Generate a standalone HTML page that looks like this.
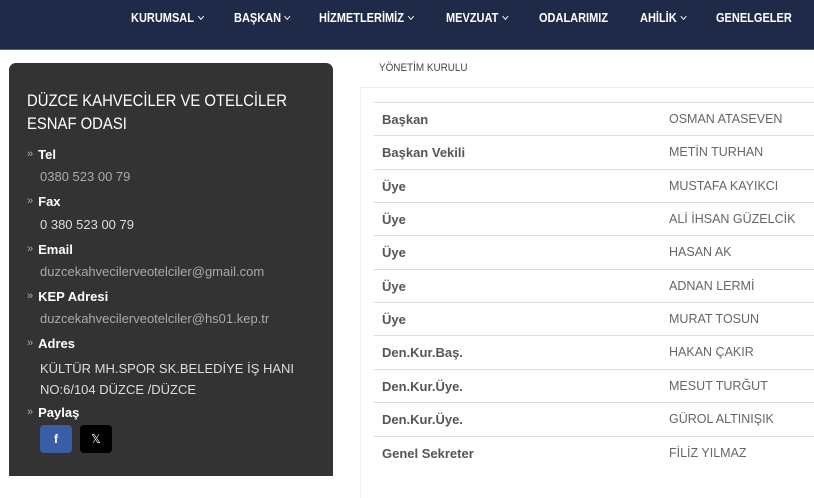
<!DOCTYPE html>
<html><head><meta charset="utf-8"><style>
body{margin:0;width:814px;height:491px;overflow:hidden;background:#fff;font-family:"Liberation Sans",sans-serif;position:relative}
.hdr{position:absolute;left:0;top:0;width:814px;height:49px;background:#1f2a48;border-bottom:1px solid #6a5470}
.nav{position:absolute;top:11px;font-size:12.5px;font-weight:bold;color:#fff;white-space:nowrap;transform:scaleX(.88);transform-origin:left}
.nav i{display:inline-block;width:4px;height:4px;border-right:1px solid #fff;border-bottom:1px solid #fff;transform:rotate(45deg);margin-left:5px;position:relative;top:-3px}
.box{position:absolute;left:9px;top:63px;width:324px;height:413px;background:#333;border-radius:7px 7px 0 0}
.title{position:absolute;left:27px;top:90px;color:#fff;font-size:16.5px;line-height:23px;transform:scaleX(.9);transform-origin:left;white-space:nowrap}
.lbl{position:absolute;left:27px;color:#fff;font-weight:bold;font-size:13px}
.lbl:before{content:"»";color:#aaa;font-weight:normal;font-size:11px;margin-right:5px;position:relative;top:-2px}
.val{position:absolute;left:40px;color:#aaa;font-size:13px}
.val.w{color:#ddd}
.bc{position:absolute;left:379px;top:62px;font-size:11px;color:#444;transform:scaleX(.9);transform-origin:left}
.panel{position:absolute;left:360px;top:87px;width:460px;height:410px;border-left:1px solid #eee;border-top:1px solid #eee}
.row{position:absolute;left:374px;width:440px;height:33px;border-top:1px solid #ddd;font-size:13px;color:#555}
.row b{position:absolute;left:8px;top:9px;color:#555}
.row span{position:absolute;left:295px;top:9px;font-size:12.5px;color:#666}
.sb{position:absolute;top:425px;width:32px;height:28px;border-radius:4px;color:#fff;font-size:12px;text-align:center;line-height:28px}
</style></head><body>
<div class="hdr"></div>
<div class="nav" style="left:131px">KURUMSAL<i></i></div>
<div class="nav" style="left:234px">BAŞKAN<i></i></div>
<div class="nav" style="left:319px">HİZMETLERİMİZ<i></i></div>
<div class="nav" style="left:446px">MEVZUAT<i></i></div>
<div class="nav" style="left:539px">ODALARIMIZ</div>
<div class="nav" style="left:640px">AHİLİK<i></i></div>
<div class="nav" style="left:716px">GENELGELER</div>
<div class="box"></div>
<div class="title">DÜZCE KAHVECİLER VE OTELCİLER<br>ESNAF ODASI</div>
<div class="lbl" style="top:147px">Tel</div><div class="val" style="top:169px">0380 523 00 79</div>
<div class="lbl" style="top:194px">Fax</div><div class="val w" style="top:217px">0 380 523 00 79</div>
<div class="lbl" style="top:242px">Email</div><div class="val" style="top:264px">duzcekahvecilerveotelciler@gmail.com</div>
<div class="lbl" style="top:289px">KEP Adresi</div><div class="val" style="top:311px">duzcekahvecilerveotelciler@hs01.kep.tr</div>
<div class="lbl" style="top:336px">Adres</div><div class="val w" style="top:358px;line-height:21px">KÜLTÜR MH.SPOR SK.BELEDİYE İŞ HANI<br>NO:6/104 DÜZCE /DÜZCE</div>
<div class="lbl" style="top:405px">Paylaş</div>
<div class="sb" style="left:40px;background:#3b5da8;font-weight:bold">f</div>
<div class="sb" style="left:80px;background:#000">𝕏</div>
<div class="bc">YÖNETİM KURULU</div>
<div class="panel"></div>
<div class="row" style="top:102px"><b>Başkan</b><span>OSMAN ATASEVEN</span></div>
<div class="row" style="top:135px"><b>Başkan Vekili</b><span>METİN TURHAN</span></div>
<div class="row" style="top:169px"><b>Üye</b><span>MUSTAFA KAYIKCI</span></div>
<div class="row" style="top:202px"><b>Üye</b><span>ALİ İHSAN GÜZELCİK</span></div>
<div class="row" style="top:235px"><b>Üye</b><span>HASAN AK</span></div>
<div class="row" style="top:269px"><b>Üye</b><span>ADNAN LERMİ</span></div>
<div class="row" style="top:302px"><b>Üye</b><span>MURAT TOSUN</span></div>
<div class="row" style="top:335px"><b>Den.Kur.Baş.</b><span>HAKAN ÇAKIR</span></div>
<div class="row" style="top:369px"><b>Den.Kur.Üye.</b><span>MESUT TURĞUT</span></div>
<div class="row" style="top:402px"><b>Den.Kur.Üye.</b><span>GÜROL ALTINIŞIK</span></div>
<div class="row" style="top:436px"><b>Genel Sekreter</b><span>FİLİZ YILMAZ</span></div>
</body></html>
